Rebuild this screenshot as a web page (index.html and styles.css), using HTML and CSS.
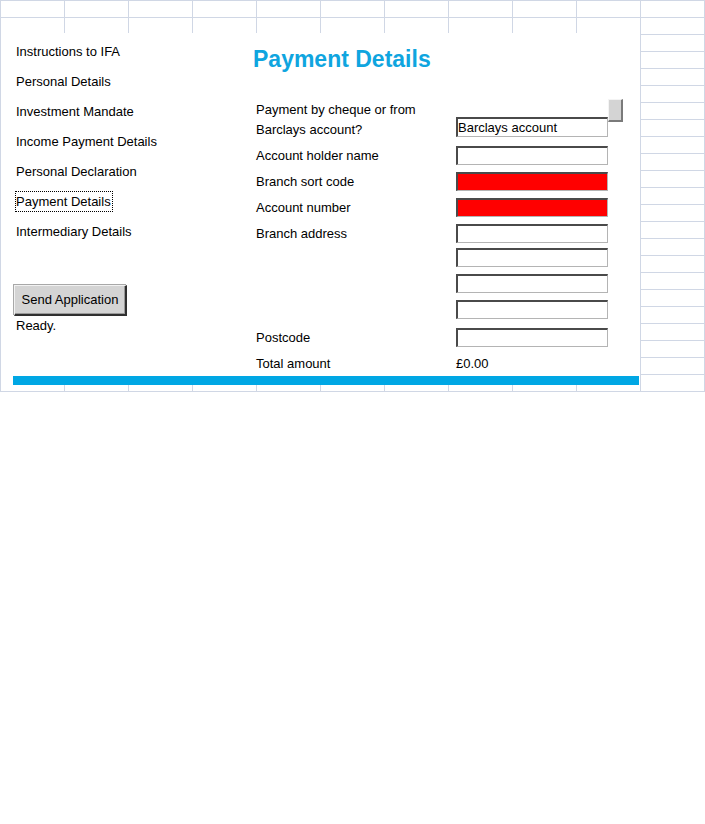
FILE: index.html
```html
<!DOCTYPE html>
<html lang="en">
<head>
<meta charset="utf-8">
<title>Payment Details</title>
<link rel="stylesheet" href="styles.css">
</head>
<body>
<div class="sheet">
  <div class="panel">
    <div class="panel-body">
      <div class="nav-col">
        <ul class="nav-list">
          <li class="nav-item">Instructions to IFA</li>
          <li class="nav-item">Personal Details</li>
          <li class="nav-item">Investment Mandate</li>
          <li class="nav-item">Income Payment Details</li>
          <li class="nav-item">Personal Declaration</li>
          <li class="nav-item active">Payment Details</li>
          <li class="nav-item">Intermediary Details</li>
        </ul>
        <button class="send-btn" type="button">Send Application</button>
        <div class="status">Ready.</div>
      </div>
      <div class="form-col">
        <h1 class="title">Payment Details</h1>
        <div class="form">
          <div class="row row-first">
            <div class="label label-2">Payment by cheque or from<br>Barclays account?</div>
            <div class="box box-text">Barclays account</div>
          </div>
          <div class="row row-after-first">
            <div class="label">Account holder name</div>
            <div class="box"></div>
          </div>
          <div class="row">
            <div class="label">Branch sort code</div>
            <div class="box box-red"></div>
          </div>
          <div class="row">
            <div class="label">Account number</div>
            <div class="box box-red"></div>
          </div>
          <div class="row">
            <div class="label">Branch address</div>
            <div class="box"></div>
          </div>
          <div class="row row-tight">
            <div class="label"></div>
            <div class="box"></div>
          </div>
          <div class="row">
            <div class="label"></div>
            <div class="box"></div>
          </div>
          <div class="row">
            <div class="label"></div>
            <div class="box"></div>
          </div>
          <div class="row row-loose">
            <div class="label">Postcode</div>
            <div class="box"></div>
          </div>
          <div class="row">
            <div class="label">Total amount</div>
            <div class="value">£0.00</div>
          </div>
        </div>
      </div>
    </div>
    <div class="bar"></div>
    <div class="spin-btn"></div>
  </div>
</div>
</body>
</html>
```
FILE: styles.css
```css
* { box-sizing: border-box; }

html, body {
  margin: 0;
  padding: 0;
  background: #ffffff;
}

body {
  font-family: "Liberation Sans", Arial, sans-serif;
  font-size: 13px;
  color: #000;
}

.sheet {
  position: relative;
  width: 705px;
  height: 392px;
  background-color: #ffffff;
  background-image:
    linear-gradient(to right, #d0d7e5 1px, transparent 1px),
    linear-gradient(to bottom, #d0d7e5 1px, transparent 1px);
  background-size: 64px 17px;
}

.panel {
  position: absolute;
  left: 1px;
  top: 33px;
  width: 639px;
  height: 352px;
  background: #ffffff;
  display: flex;
  flex-direction: column;
}

.panel-body {
  display: flex;
  flex: 1;
  padding: 8px 0 0 14px;
}

.nav-col {
  width: 241px;
  display: flex;
  flex-direction: column;
  align-items: flex-start;
}

.nav-list {
  list-style: none;
  margin: 0;
  padding: 0;
  display: flex;
  flex-direction: column;
  align-items: flex-start;
  gap: 9px;
}

.nav-item {
  line-height: 19px;
  border: 1px dotted transparent;
  padding: 0 1px 0 0;
  white-space: nowrap;
}

.nav-item.active {
  border-color: #000;
}

.send-btn {
  margin: 43px 0 0 -1px;
  width: 113px;
  height: 31px;
  padding: 0 0 1px 0;
  font-family: "Liberation Sans", Arial, sans-serif;
  font-size: 13px;
  color: #000;
  background: #d4d4d4;
  border-style: solid;
  border-width: 1px 2px 2px 1px;
  border-color: #f2f2f2 #303030 #303030 #f2f2f2;
  box-shadow: inset -1px -1px 0 #9a9a9a, -1px -1px 0 #a8a8a8;
}

.status {
  margin: 0 0 0 1px;
  line-height: 19px;
}

.form-col {
  flex: 1;
  display: flex;
  flex-direction: column;
}

.title {
  margin: 4px 0 0 -3px;
  font-size: 23px;
  line-height: 28px;
  font-weight: bold;
  color: #0fa5df;
}

.form {
  margin-top: 27px;
  display: flex;
  flex-direction: column;
  gap: 7px;
}

.row {
  display: flex;
  align-items: center;
  height: 19px;
}

.row-first {
  height: 40px;
  align-items: flex-start;
}

.row-after-first { margin-top: -1px; }
.row-tight { margin-top: -2px; }
.row-loose { margin-top: 2px; }

.label {
  width: 200px;
  line-height: 19px;
  white-space: nowrap;
}

.label-2 {
  line-height: 20px;
}

.box {
  width: 152px;
  height: 19px;
  background: #ffffff;
  border-style: solid;
  border-width: 2px 1px 1px 2px;
  border-color: #4a4a4a #b4b4b4 #b4b4b4 #4a4a4a;
}

.box-text {
  margin-top: 17px;
  height: 20px;
  line-height: 18px;
  padding-left: 0;
  white-space: nowrap;
}

.box-red {
  background: #ff0000;
}

.value {
  line-height: 19px;
}

.bar {
  margin-left: 12px;
  width: 626px;
  height: 9px;
  background: #00a7e4;
}

.spin-btn {
  position: absolute;
  left: 607px;
  top: 66px;
  width: 15px;
  height: 23px;
  background: #d4d4d4;
  border-style: solid;
  border-width: 1px 2px 2px 1px;
  border-color: #f4f4f4 #7a7a7a #7a7a7a #f4f4f4;
}
```
